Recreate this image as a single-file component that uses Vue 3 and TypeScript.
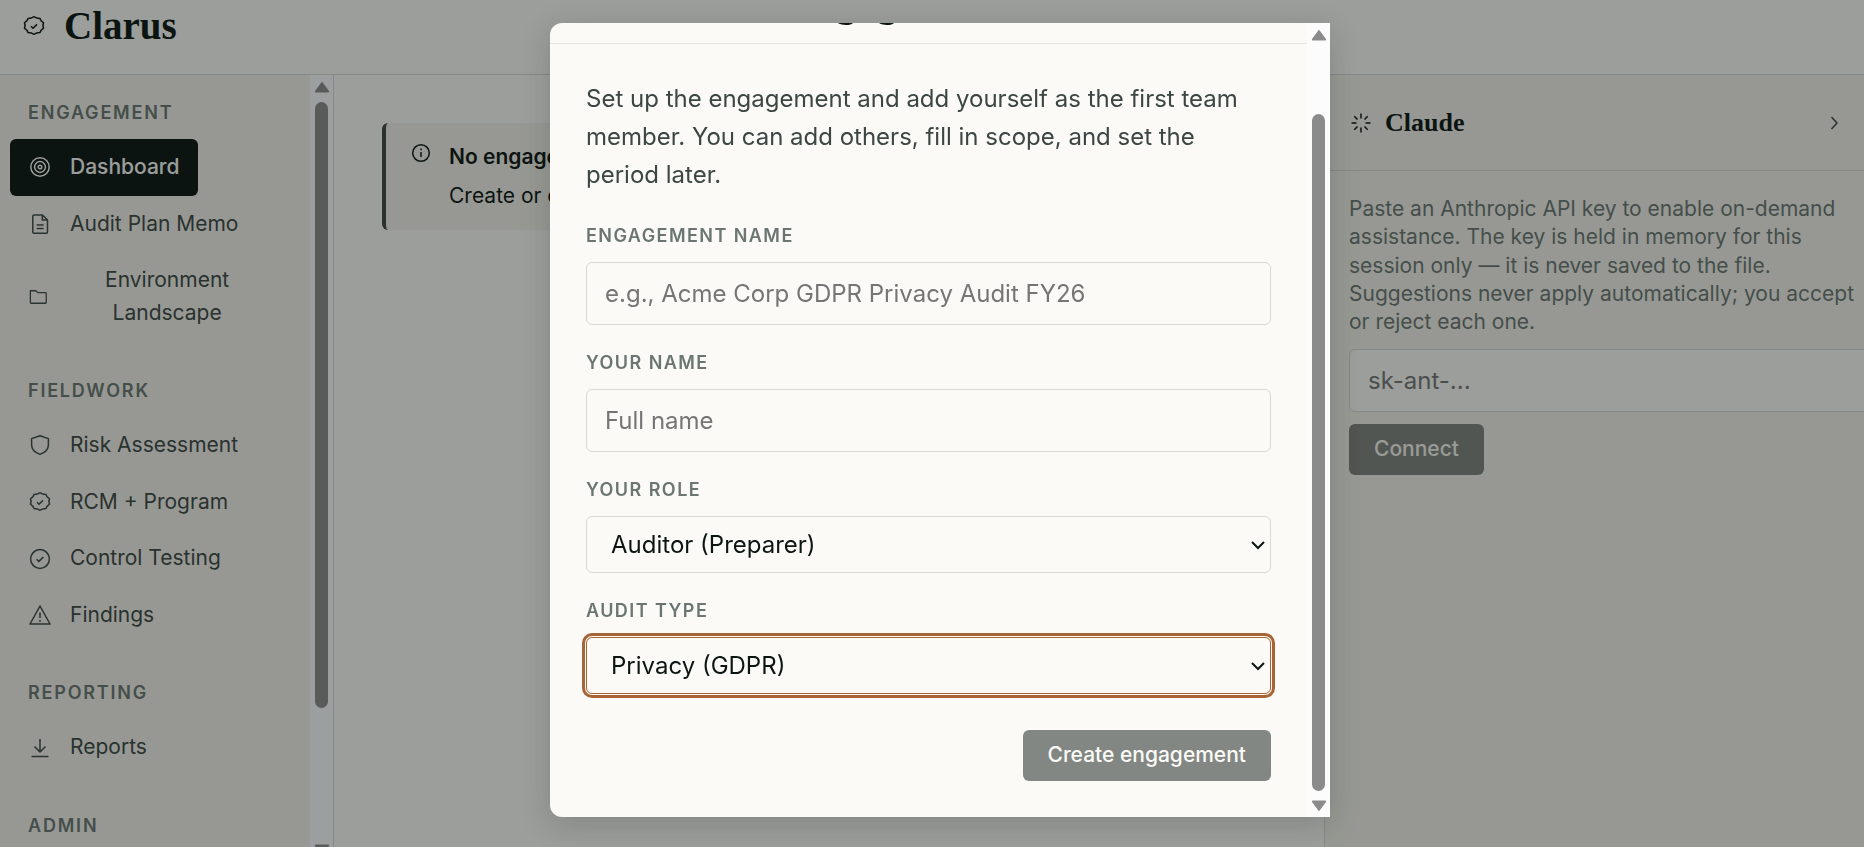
<script setup lang="ts">
import { ref } from 'vue'

interface NavItem { label: string; icon: string; active?: boolean }
interface NavSection { title: string; items: NavItem[] }

/* Closed zigzag around an ellipse, with one tip at the top centre. */
function seal(cx: number, cy: number, rx: number, ry: number, tips: number): string {
  let d = ''
  for (let i = 0; i < tips * 2; i++) {
    const a = (i / (tips * 2)) * Math.PI * 2 - Math.PI / 2
    const k = i % 2 === 0 ? 1 : 0.89
    const x = (cx + rx * k * Math.cos(a)).toFixed(2)
    const y = (cy + ry * k * Math.sin(a)).toFixed(2)
    d += (i === 0 ? 'M' : 'L') + x + ' ' + y
  }
  return d + 'Z'
}

const icons: Record<string, string> = {
  seal: seal(12, 11.5, 10, 8.8, 10) + 'M9 12.2l2 2 4-3.8',
  target: 'M12 2.8a9.2 9.2 0 1 0 0 18.4a9.2 9.2 0 1 0 0-18.4ZM12 6.6a5.4 5.4 0 1 0 0 10.8a5.4 5.4 0 1 0 0-10.8ZM12 10.2a1.8 1.8 0 1 0 0 3.6a1.8 1.8 0 1 0 0-3.6Z',
  doc: 'M6 3h8.5L19.5 8v12a1.2 1.2 0 0 1-1.2 1.2H6A1.2 1.2 0 0 1 4.8 20V4.2A1.2 1.2 0 0 1 6 3ZM14.3 3.2V8h5M8.6 13h7M8.6 16.6h7',
  folder: 'M2.8 4.6h6.6l2.2 2.2h9.2a.8.8 0 0 1 .8.8v11a.8.8 0 0 1-.8.8H3.6a.8.8 0 0 1-.8-.8Z',
  shield: 'M12 2.8l8.4 2.8v6.2c0 5-3.6 8-8.4 9.6c-4.8-1.6-8.4-4.6-8.4-9.6V5.6Z',
  check: 'M12 2.6a9.4 9.4 0 1 0 0 18.8a9.4 9.4 0 1 0 0-18.8ZM8.6 12.2l2.3 2.2 4.5-4.4',
  warning: 'M12 3L22 21H2ZM12 9.5v5.5M12 17v1.8',
  download: 'M12 3v12.5M6.5 10.5l5.5 5.5 5.5-5.5M3.5 20.5h17',
}

const sections: NavSection[] = [
  { title: 'Engagement', items: [
    { label: 'Dashboard', icon: 'target', active: true },
    { label: 'Audit Plan Memo', icon: 'doc' },
    { label: 'Environment Landscape', icon: 'folder' },
  ] },
  { title: 'Fieldwork', items: [
    { label: 'Risk Assessment', icon: 'shield' },
    { label: 'RCM + Program', icon: 'seal' },
    { label: 'Control Testing', icon: 'check' },
    { label: 'Findings', icon: 'warning' },
  ] },
  { title: 'Reporting', items: [{ label: 'Reports', icon: 'download' }] },
  { title: 'Admin', items: [] },
]

const engagementName = ref('')
const userName = ref('')
const role = ref('Auditor (Preparer)')
const auditType = ref('Privacy (GDPR)')
const apiKey = ref('')
</script>

<template>
  <div class="app">
    <header class="topbar">
      <svg class="icon" viewBox="0 0 24 24" aria-hidden="true"><path :d="icons.seal" /></svg>
      <span class="brand">Clarus</span>
    </header>

    <div class="columns">
      <aside class="sidebar">
        <nav class="nav" aria-label="Main">
          <section v-for="s in sections" :key="s.title" class="nav-section">
            <h2 class="eyebrow">{{ s.title }}</h2>
            <button v-for="i in s.items" :key="i.label" type="button" class="nav-item" :class="{ active: i.active }">
              <svg class="icon" viewBox="0 0 24 24" aria-hidden="true"><path :d="icons[i.icon]" /></svg>
              <span>{{ i.label }}</span>
            </button>
          </section>
        </nav>
        <div class="scrollbar nav-scroll" aria-hidden="true">
          <svg class="arrow" viewBox="0 0 14 10"><path d="M7 1.5L12.5 9h-11Z" /></svg>
          <div class="thumb"></div>
          <svg class="arrow" viewBox="0 0 14 10"><path d="M1.5 1h11L7 8.5Z" /></svg>
        </div>
      </aside>

      <main class="main">
        <div class="notice">
          <svg class="icon" viewBox="0 0 24 24" aria-hidden="true">
            <circle cx="12" cy="12" r="8.3" /><path d="M12 11v5M12 7.600v1.600" />
          </svg>
          <div>
            <p class="notice-title">No engagement open</p>
            <p class="notice-text">Create or open an engagement to begin.</p>
          </div>
        </div>
      </main>

      <aside class="assistant">
        <div class="assistant-head">
          <svg class="icon" viewBox="0 0 24 24" aria-hidden="true">
            <path d="M12 2.5v5M12 16.5v5M2.5 12h5M16.5 12h5M5.3 5.3l3.2 3.2M15.5 15.5l3.2 3.2M5.3 18.7l3.2-3.2M15.5 8.5l3.2-3.2" />
          </svg>
          <h2 class="assistant-title">Claude</h2>
          <button type="button" class="collapse" aria-label="Collapse panel">
            <svg class="icon" viewBox="0 0 24 24" aria-hidden="true"><path d="M9.500 6l5.500 6-5.500 6" /></svg>
          </button>
        </div>
        <div class="assistant-body">
          <p class="assistant-text">Paste an Anthropic API key to enable on-demand assistance. The key is held in memory for this session only — it is never saved to the file. Suggestions never apply automatically; you accept or reject each one.</p>
          <input v-model="apiKey" class="control key" type="text" placeholder="sk-ant-..." aria-label="Anthropic API key" />
          <button type="button" class="primary" disabled>Connect</button>
        </div>
      </aside>
    </div>

    <div class="overlay">
      <div class="modal" role="dialog" aria-modal="true" aria-labelledby="dialog-title">
        <div class="modal-content">
          <header class="modal-head"><h1 id="dialog-title">Create new engagement</h1></header>
          <form class="modal-body" @submit.prevent>
            <p class="intro">Set up the engagement and add yourself as the first team member. You can add others, fill in scope, and set the period later.</p>
            <div class="field">
              <label class="eyebrow" for="eng-name">Engagement name</label>
              <input id="eng-name" v-model="engagementName" class="control" type="text" placeholder="e.g., Acme Corp GDPR Privacy Audit FY26" />
            </div>
            <div class="field">
              <label class="eyebrow" for="user-name">Your name</label>
              <input id="user-name" v-model="userName" class="control" type="text" placeholder="Full name" />
            </div>
            <div class="field">
              <label class="eyebrow" for="role">Your role</label>
              <div class="select-wrap">
                <select id="role" v-model="role" class="control select">
                  <option>Auditor (Preparer)</option>
                  <option>Reviewer</option>
                </select>
                <svg class="caret" viewBox="0 0 14 10" aria-hidden="true"><path d="M1 2l6 6 6-6" /></svg>
              </div>
            </div>
            <div class="field">
              <label class="eyebrow" for="audit-type">Audit type</label>
              <div class="select-wrap">
                <select id="audit-type" v-model="auditType" class="control select focused">
                  <option>Privacy (GDPR)</option>
                  <option>Security</option>
                </select>
                <svg class="caret" viewBox="0 0 14 10" aria-hidden="true"><path d="M1 2l6 6 6-6" /></svg>
              </div>
            </div>
            <div class="actions"><button type="submit" class="primary" disabled>Create engagement</button></div>
          </form>
        </div>
        <div class="scrollbar modal-scroll" aria-hidden="true">
          <svg class="arrow" viewBox="0 0 14 10"><path d="M7 1.5L12.5 9h-11Z" /></svg>
          <div class="thumb"></div>
          <svg class="arrow" viewBox="0 0 14 10"><path d="M1.5 1h11L7 8.5Z" /></svg>
        </div>
      </div>
    </div>
  </div>
</template>

<style>
body { margin: 0; overflow: hidden; }
</style>

<style scoped>
* { box-sizing: border-box; }
.app {
  --ink: #0c1512;
  --soft: #3c4744;
  --muted: #6b7672;
  --paper: #fbfaf7;
  --sand: #f4f1ea;
  --line: #d8d8d4;
  display: flex;
  flex-direction: column;
  height: 100vh;
  overflow: hidden;
  background: var(--paper);
  color: var(--ink);
  font-family: Inter, "Liberation Sans", sans-serif;
  font-size: 21px;
  line-height: 1.55;
}
h1, h2, p { margin: 0; }
button, input, select { font: inherit; }
.icon {
  flex: 0 1 24px;
  width: 24px;
  min-width: 0;
  height: 24px;
  fill: none;
  stroke: currentColor;
  stroke-width: 1.5;
  stroke-linejoin: round;
}
.topbar {
  display: flex;
  flex: none;
  align-items: center;
  gap: 18px;
  height: 75px;
  padding: 0 22px 22px;
  border-bottom: 1px solid var(--line);
}
.brand { font: bold 39px/48px "Liberation Serif", serif; }
.columns { display: flex; flex: 1; min-height: 0; }
.sidebar {
  display: flex;
  flex: none;
  width: 334px;
  overflow: hidden;
  background: var(--sand);
  border-right: 1px solid var(--line);
}
.nav {
  display: flex;
  flex: 1;
  flex-direction: column;
  gap: 36px;
  min-width: 0;
  padding: 24px 24px 0 10px;
}
.nav-section { display: flex; flex-direction: column; align-items: flex-start; }
.eyebrow {
  color: var(--muted);
  font-size: 18px;
  font-weight: 600;
  line-height: 27px;
  letter-spacing: 0.08em;
  text-transform: uppercase;
}
.nav .eyebrow { margin: 0 0 13px; padding-left: 18px; letter-spacing: 0.1em; }
.nav-item {
  display: flex;
  align-items: center;
  gap: 18px;
  max-width: 100%;
  padding: 12px 18px;
  border: 0;
  border-radius: 6px;
  background: none;
  color: var(--soft);
  text-align: center;
}
.nav-item.active { background: var(--ink); color: var(--paper); font-weight: 500; }
.scrollbar {
  display: flex;
  flex: none;
  flex-direction: column;
  align-items: center;
  width: 23px;
  background: #fcfcfd;
}
.thumb { width: 13px; border-radius: 7px; background: #8b8b8b; }
.arrow { flex: none; width: 16px; height: 12px; fill: #8b8b8b; stroke: #8b8b8b; stroke-width: 1.5; stroke-linejoin: round; }
.nav-scroll { padding-top: 6px; gap: 9px; }
.nav-scroll .thumb { flex: none; height: 606px; }
.nav-scroll .arrow:last-child { margin-top: 127px; }
.main { flex: 1; min-width: 0; padding: 48px; }
.notice {
  display: flex;
  gap: 16px;
  min-height: 107px;
  padding: 18px 24px 12px 23px;
  border-left: 4px solid var(--soft);
  border-radius: 6px;
  background: var(--sand);
}
.notice .icon { flex: none; }
.notice-title { margin-bottom: 6px; font-weight: 600; }
.assistant {
  flex: none;
  width: 540px;
  overflow: hidden;
  background: var(--sand);
  border-left: 1px solid var(--line);
}
.assistant-head {
  display: flex;
  align-items: center;
  gap: 12px;
  height: 96px;
  padding: 0 18px 0 24px;
  border-bottom: 1px solid var(--line);
}
.assistant-title { font: bold 26px/36px "Liberation Serif", serif; }
.collapse {
  display: flex;
  margin-left: auto;
  padding: 0;
  border: 0;
  background: none;
  color: var(--soft);
}
.assistant-body {
  display: flex;
  flex-direction: column;
  align-items: flex-start;
  gap: 12px;
  padding: 24px 0 24px 24px;
}
.assistant-text { color: var(--muted); line-height: 1.35; }
.control {
  width: 100%;
  height: 63px;
  padding: 0 18px;
  border: 1px solid var(--line);
  border-radius: 6px;
  background: var(--paper);
  color: var(--ink);
  font-size: 24px;
  outline: none;
}
.control::placeholder { color: #757575; opacity: 1; }
.key { flex: none; width: calc(100% + 24px); }
.primary {
  height: 51px;
  padding: 0 25px;
  border: 0;
  border-radius: 6px;
  background: var(--ink);
  color: var(--paper);
  font-weight: 500;
  opacity: 0.5;
}
.overlay {
  position: fixed;
  inset: 0;
  display: flex;
  justify-content: center;
  padding: 23px 24px 30px 40px;
  background: rgba(12, 21, 18, 0.4);
}
.modal {
  display: flex;
  width: 780px;
  overflow: hidden;
  border-radius: 12px 0 0 12px;
  background: var(--paper);
  box-shadow: 0 8px 32px rgba(12, 21, 18, 0.18);
}
.modal-content {
  display: flex;
  flex: 1;
  flex-direction: column;
  justify-content: flex-end;
  min-width: 0;
  overflow: hidden;
}
.modal-head {
  flex: none;
  padding: 24px 36px 17px;
  border-bottom: 1px solid #e6e6e1;
}
.modal-head h1 { font: bold 41px/48px "Liberation Serif", serif; }
.modal-body {
  display: flex;
  flex: none;
  flex-direction: column;
  gap: 24px;
  padding: 36px;
}
.intro { margin-bottom: 4px; color: var(--soft); font-size: 24px; line-height: 38px; }
.field { display: flex; flex-direction: column; gap: 13px; }
.select-wrap { display: grid; align-items: center; }
.select-wrap > * { grid-area: 1 / 1; }
.select { height: 57px; padding: 0 24px; appearance: none; }
.focused { border-color: #a96436; outline: 3px solid #a96436; outline-offset: 1px; }
.caret {
  justify-self: end;
  width: 14px;
  height: 10px;
  margin-right: 6px;
  fill: none;
  stroke: var(--ink);
  stroke-width: 2;
  pointer-events: none;
}
.actions { display: flex; justify-content: flex-end; margin-top: 12px; }
.modal-scroll { padding: 6px 0 5px; gap: 9px; }
.modal-scroll .thumb { flex: 1; margin-top: 64px; }
</style>
